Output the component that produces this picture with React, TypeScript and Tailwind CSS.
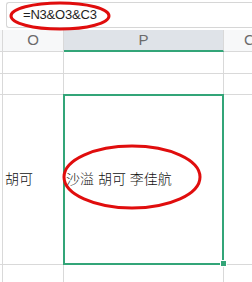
import React from "react";

const line = "border-[#d9d9d9]";

const HeaderCell = ({ label, active }: { label: string; active?: boolean }) => (
  <div
    className={`flex items-center justify-center border-r ${line} ${
      active
        ? "border-b-2 border-b-[#33a578] bg-[#dfe3e8]"
        : "border-b bg-[#f7f8f9]"
    } text-[15px] text-[#6b6b6b]`}
  >
    {label}
  </div>
);

const Cell = ({ children, className = "" }: { children?: React.ReactNode; className?: string }) => (
  <div className={`flex items-center border-r border-b ${line} ${className}`}>{children}</div>
);

export default function App() {
  return (
    <div
      className="relative h-[282px] w-[252px] overflow-hidden bg-white"
      style={{ fontFamily: '"Liberation Sans", "Noto Sans CJK SC", sans-serif' }}
    >
      {/* formula bar */}
      <div className="pl-[6px] pt-[2px]">
        <div className="flex h-[26px] items-center rounded-l-[3px] border border-r-0 border-[#d6d6d6] pl-[16px] text-[13px] tracking-[-0.2px] text-[#1e1e1e]">
          =N3&amp;O3&amp;C3
        </div>
      </div>

      {/* sheet */}
      <div className="mt-[2px] grid grid-cols-[3px_61px_160px_1fr] grid-rows-[22px_22px_21px_170px]">
        <div className={`border-r border-b ${line} bg-[#f7f8f9]`} />
        <HeaderCell label="O" />
        <HeaderCell label="P" active />
        <div className={`flex items-center border-b ${line} bg-[#f7f8f9] pl-[20px] text-[15px] text-[#6b6b6b]`}>C</div>

        <Cell />
        <Cell />
        <Cell />
        <Cell />

        <Cell />
        <Cell />
        <Cell />
        <Cell />

        <Cell />
        <Cell className="pl-[2px] text-[14px] font-light text-[#111]">胡可</Cell>
        <Cell className="pl-[2px] text-[14px] font-light text-[#111]">沙溢 胡可 李佳航</Cell>
        <Cell />
      </div>
      <div className="grid h-[20px] grid-cols-[3px_61px_160px_1fr]">
        <div className={`border-r ${line}`} />
        <div className={`border-r ${line}`} />
        <div className={`border-r ${line}`} />
        <div />
      </div>

      {/* selection */}
      <div className="pointer-events-none absolute left-[63px] top-[94px] h-[171px] w-[161px] border-2 border-[#33a578]" />
      <div className="absolute left-[220px] top-[260px] h-[7px] w-[7px] border border-white bg-[#33a578]" />

      {/* red annotations */}
      <svg className="pointer-events-none absolute left-0 top-0" width="252" height="282">
        <ellipse cx="60" cy="16" rx="49" ry="13" fill="none" stroke="#e00d0d" strokeWidth="3" />
        <ellipse cx="132" cy="177" rx="68" ry="31" fill="none" stroke="#e00d0d" strokeWidth="3" />
      </svg>
    </div>
  );
}
